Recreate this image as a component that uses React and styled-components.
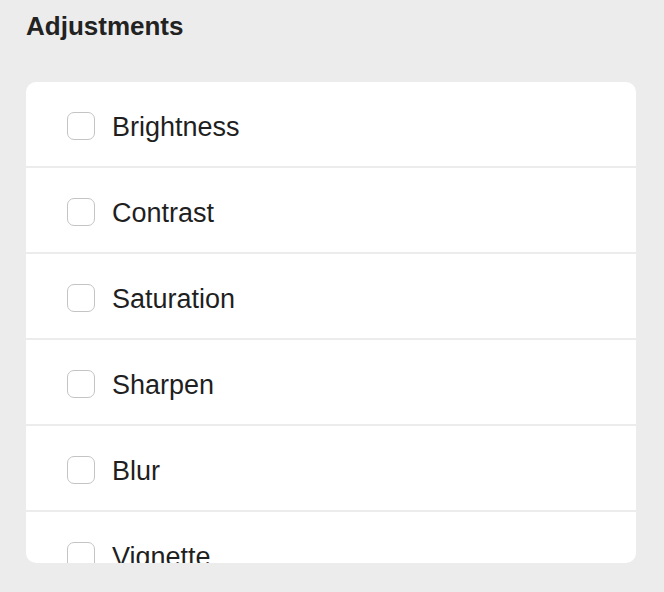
import React from "react";
import styled, { createGlobalStyle } from "styled-components";

const Global = createGlobalStyle`
  html, body { margin: 0; padding: 0; background: #ececec; }
  body { font-family: "Liberation Sans", Arial, sans-serif; -webkit-font-smoothing: antialiased; }
`;

const Page = styled.div`
  padding: 0 28px 0 26px;
  height: 592px;
  box-sizing: border-box;
  display: flex;
  flex-direction: column;
`;

const Title = styled.h1`
  margin: 10px 0 0 0;
  font-size: 26px;
  line-height: 32px;
  font-weight: 700;
  color: #222;
`;

const Card = styled.div`
  margin-top: 40px;
  height: 481px;
  flex: none;
  background: #fff;
  border-radius: 10px;
  overflow: hidden;
`;

const Row = styled.label`
  display: flex;
  align-items: center;
  gap: 17px;
  height: 86px;
  padding: 3px 0 0 41px;
  box-sizing: border-box;
  border-bottom: 2px solid #ececec;
  flex: none;
`;

const Box = styled.span`
  width: 28px;
  height: 28px;
  box-sizing: border-box;
  border: 1px solid #c4c4c4;
  border-radius: 7px;
  background: #fff;
  flex: none;
`;

const Label = styled.span`
  font-size: 27px;
  color: #1f1f1f;
  line-height: 30px;
  padding-top: 3px;
`;

const items = ["Brightness", "Contrast", "Saturation", "Sharpen", "Blur", "Vignette"];

export default function App() {
  return (
    <>
      <Global />
      <Page>
        <Title>Adjustments</Title>
        <Card>
          {items.map((t) => (
            <Row key={t}>
              <Box />
              <Label>{t}</Label>
            </Row>
          ))}
        </Card>
      </Page>
    </>
  );
}
